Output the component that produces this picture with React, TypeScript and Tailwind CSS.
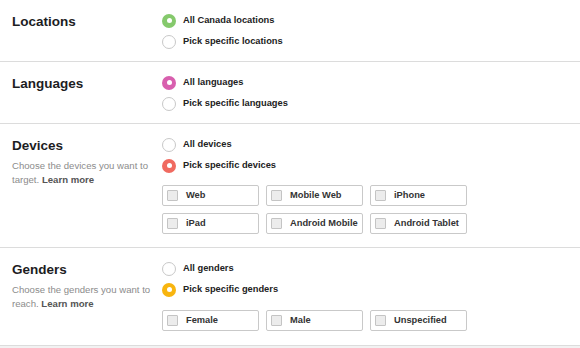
import React from 'react';

type Section = {
  title: string;
  desc?: string;
  color: string;
  options: string[];
  selected: number;
  boxes?: string[];
  boxGap?: string;
};

const sections: Section[] = [
  { title: 'Locations', color: 'bg-[#85c96c]', options: ['All Canada locations', 'Pick specific locations'], selected: 0 },
  { title: 'Languages', color: 'bg-[#d85fae]', options: ['All languages', 'Pick specific languages'], selected: 0 },
  {
    title: 'Devices',
    desc: 'Choose the devices you want to target.',
    color: 'bg-[#f06a60]',
    options: ['All devices', 'Pick specific devices'],
    selected: 1,
    boxes: ['Web', 'Mobile Web', 'iPhone', 'iPad', 'Android Mobile', 'Android Tablet'],
    boxGap: 'mt-[9px] mb-[4px]',
  },
  {
    title: 'Genders',
    desc: 'Choose the genders you want to reach.',
    color: 'bg-[#f8b50f]',
    options: ['All genders', 'Pick specific genders'],
    selected: 1,
    boxes: ['Female', 'Male', 'Unspecified'],
    boxGap: 'mt-[10px] mb-[5px]',
  },
];

const Radio: React.FC<{ on: boolean; color: string; label: string }> = ({ on, color, label }) => (
  <label className="flex h-[21px] items-center gap-[7px]">
    {on ? (
      <span className={`flex h-[14px] w-[14px] items-center justify-center rounded-full ${color}`}>
        <span className="h-[5px] w-[5px] rounded-full bg-white" />
      </span>
    ) : (
      <span className="h-[14px] w-[14px] rounded-full border border-[#c8c8c8] bg-white" />
    )}
    <span className="whitespace-nowrap text-[9.3px] font-bold text-[#222]">{label}</span>
  </label>
);

export default function App() {
  return (
    <div className="min-h-screen bg-[#f2f2f2] font-['Liberation_Sans',Arial,sans-serif]">
      <div className="border-b border-[#dcdcdc] bg-white">
        {sections.map((s, i) => (
          <div key={s.title} className={`flex px-3 pt-[10px] pb-[9px] ${i > 0 ? 'border-t border-[#dcdcdc]' : ''}`}>
            <div className="w-[150px] shrink-0 pt-[2px]">
              <h2 className="text-[13.5px] leading-[20px] font-bold text-[#1d1d1f]">{s.title}</h2>
              {s.desc && (
                <p className="mt-[3px] w-[148px] text-[9.6px] leading-[14px] text-[#8c8c8c]">
                  {s.desc} <span className="font-bold text-[#555]">Learn more</span>
                </p>
              )}
            </div>
            <div className="flex flex-col">
              {s.options.map((o, j) => (
                <Radio key={o} on={j === s.selected} color={s.color} label={o} />
              ))}
              {s.boxes && (
                <div className={`grid grid-cols-[97px_97px_97px] gap-x-[7px] gap-y-[7px] ${s.boxGap}`}>
                  {s.boxes.map((b) => (
                    <div key={b} className="flex h-[21px] items-center gap-[8px] rounded-[2px] border border-[#c9c9c9] bg-white px-[4px]">
                      <span className="h-[11px] w-[11px] shrink-0 rounded-[1px] border border-[#c4c4c4] bg-[#ececec]" />
                      <span className="whitespace-nowrap text-[9.3px] font-bold text-[#333]">{b}</span>
                    </div>
                  ))}
                </div>
              )}
            </div>
          </div>
        ))}
      </div>
    </div>
  );
}
